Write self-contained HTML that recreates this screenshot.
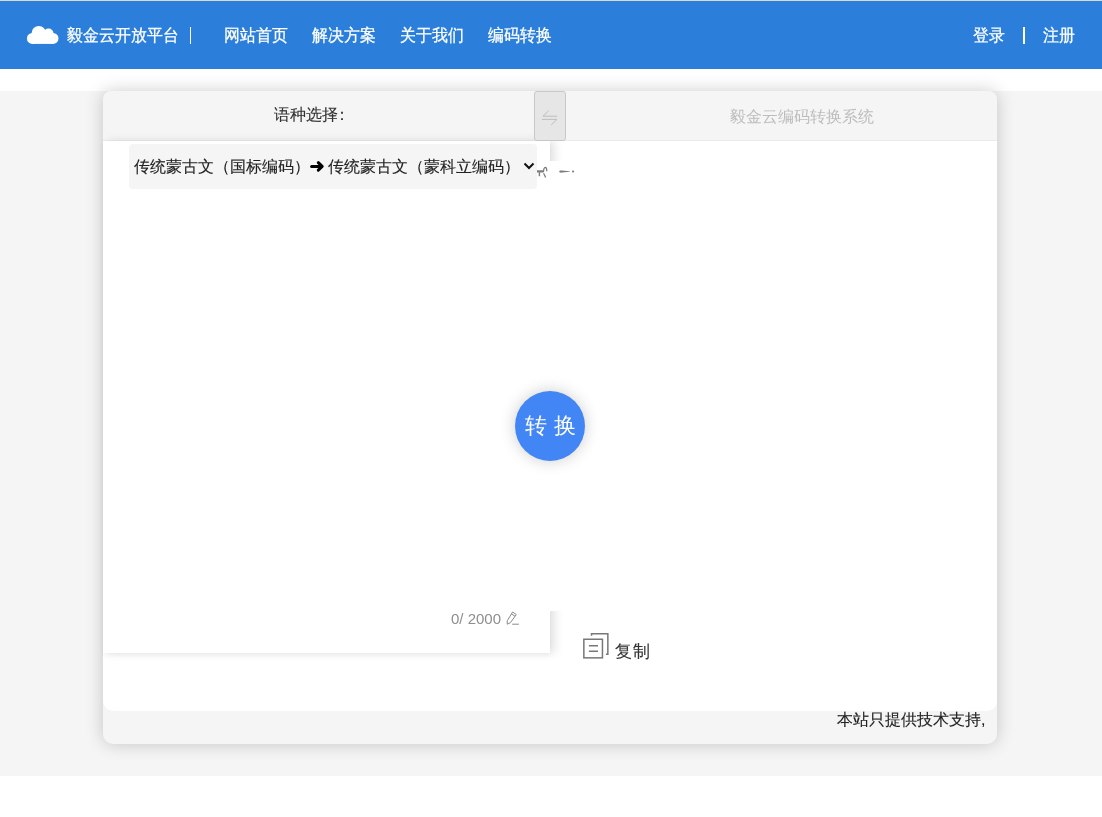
<!DOCTYPE html>
<html><head><meta charset="utf-8">
<style>
*{margin:0;padding:0;box-sizing:border-box}
html,body{width:1102px;height:817px;overflow:hidden;background:#fff;font-family:"Liberation Sans",sans-serif;position:relative}
.s{-webkit-text-stroke:0.12px currentColor}
.hdr{-webkit-text-stroke:0.25px #fff}
.topline{position:absolute;left:0;top:0;width:1102px;height:1px;background:#d9d9d9;z-index:5}
.hdr{position:absolute;left:0;top:0;width:1102px;height:69px;background:#2b7fdb;color:#fff;font-size:16px}
.hdr span{position:absolute;top:23px;transform:translateY(0.7px) scaleY(1.07);line-height:24px;white-space:nowrap}
.cloud{position:absolute;left:26px;top:25px}
.bar{position:absolute;top:27px;width:1.5px;height:16.5px;background:#fff}
.graybg{position:absolute;left:0;top:91px;width:1102px;height:685px;background:#f5f5f5}
.card{position:absolute;left:103px;top:91px;width:894px;height:653px;background:#f5f5f5;border-radius:8px 8px 10px 10px;box-shadow:0 0 18px rgba(0,0,0,.2)}
.cardhead{position:absolute;left:0;top:0;width:894px;height:50px;border-bottom:1px solid #ebebeb}
.body{position:absolute;left:0;top:50px;width:894px;height:570px;background:#fff;border-radius:0 0 10px 10px}
.t{position:absolute;white-space:nowrap;line-height:20px}
.swap{position:absolute;left:431px;top:0;width:32px;height:50px;background:#e6e6e6;border:1px solid #c8c8c8;border-radius:3px}
.sel{position:absolute;left:26px;top:53px;width:408px;height:45px;background:#f5f5f5;border-radius:4px}
.ta{position:absolute;left:0;top:50px;width:447px;height:512px;background:#fff;box-shadow:5px 0 9px rgba(0,0,0,.11),0 2px 5px rgba(0,0,0,.04)}
.cover{position:absolute;left:447px;top:70px;width:440px;height:450px;background:#fff}
.btn{position:absolute;left:412px;top:300px;width:70px;height:70px;border-radius:50%;background:#4285f4;box-shadow:0 0 16px rgba(0,0,0,.2);color:#fff;font-size:22px;text-align:center;line-height:69px;-webkit-text-stroke:0;letter-spacing:7px;text-indent:7px}
</style></head><body class="s"><div id="root" style="position:absolute;left:0;top:0;width:1102px;height:817px;will-change:transform">
<div class="topline"></div>
<div class="hdr">
  <svg class="cloud" width="33" height="20" viewBox="0 0 33 20"><g fill="#fff"><circle cx="12.8" cy="8.2" r="7.2"/><circle cx="22.5" cy="8.5" r="5"/><circle cx="6.4" cy="13.4" r="5.5"/><circle cx="27" cy="13.4" r="5.5"/><rect x="6.4" y="8" width="20.6" height="10.9"/></g></svg>
  <span style="left:67px">毅金云开放平台</span>
  <div class="bar" style="left:190.2px;width:1.2px"></div>
  <span style="left:224px">网站首页</span>
  <span style="left:312px">解决方案</span>
  <span style="left:400px">关于我们</span>
  <span style="left:488px">编码转换</span>
  <span style="left:973px">登录</span>
  <div class="bar" style="left:1023px;width:2px"></div>
  <span style="left:1043px">注册</span>
</div>
<div class="graybg"></div>
<div class="card">
  <div class="cardhead">
    <div class="t" style="left:171px;top:14px;font-size:16px;color:#333">语种选择<span style="margin-left:-4.5px">：</span></div>
    <div class="t" style="left:627px;top:16px;font-size:16px;color:#bdbdbd;-webkit-text-stroke:0">毅金云编码转换系统</div>
  </div>
  <div class="body"></div>
  <div class="ta">
    <div class="t" style="left:348px;top:467.8px;font-size:15px;color:#8e8e8e;-webkit-text-stroke:0">0/ 2000</div>
    
  </div>
  <div class="cover"></div>
  <div class="swap"><svg width="32" height="50" viewBox="0 0 32 50" style="position:absolute;left:-1px;top:-1px"><g fill="none" stroke="#bdbdbd" stroke-width="1"><path d="M23.3 25.2 H9 L14.6 19.7"/><path d="M7.9 28.4 H22.9 L17.2 34"/></g></svg></div>
  <div class="sel"><div class="t" style="left:5px;top:12.5px;font-size:16px;color:#222">传统蒙古文（国标编码）<span style="display:inline-block;width:18px"></span>传统蒙古文（蒙科立编码）</div>
    <svg style="position:absolute;left:0;top:0" width="210" height="40"><g fill="none" stroke="#000" stroke-width="3" stroke-linecap="round" stroke-linejoin="round"><path d="M182.6 22.4 H192.5"/><path d="M189.3 18.7 L193.2 22.4 L189.3 26.1"/></g></svg>
    <svg style="position:absolute;left:394px;top:18.3px" width="12" height="8" viewBox="0 0 12 8"><path d="M1.5 1.5 L6 6 L10.5 1.5" fill="none" stroke="#111" stroke-width="2"/></svg>
  </div>
  <div class="btn">转换</div>
  <div class="t" style="left:512.4px;top:550.5px;font-size:17px;letter-spacing:1px;color:#333">复制</div>
  <div class="t" style="left:734px;top:618.7px;font-size:16px;color:#222">本站只提供技术支持,</div>
</div>
<svg style="position:absolute;left:0;top:0;z-index:10" width="1102" height="817" viewBox="0 0 1102 817">
  <g fill="none" stroke="#787878" stroke-width="1.5">
    <rect x="583.85" y="639.25" width="18.6" height="18.6"/>
    <path d="M591.55 635.8 V633.85 H607.85 V654.3 H605.9"/>
    <path d="M588.9 645.7 H598 M588.9 651.2 H598"/>
  </g>
  <g fill="none" stroke="#8a8a8a" stroke-width="1" stroke-linejoin="round">
    <path d="M512.6 612.0 L516.3 614.5 L510.41 622.71 L507.2 624.2 L507.31 620.67 Z"/>
    <path d="M511.38 613.84 L515.08 616.34"/>
    <path d="M512.2 624.2 H518.9"/>
  </g>
  <g fill="#7d7d7d">
    <path d="M537 170.3 H543.6 V172.6 H540.1 V176.2 H538.7 V172.6 H537 Z"/>
    <path d="M543.4 172 C543.6 169.5 544.2 167.5 545.2 167.3 C546.2 167.2 546.8 168.5 546.8 171.2" fill="none" stroke="#7d7d7d" stroke-width="1.3"/>
    <path d="M543.6 173.3 C544.3 174.8 545.2 176.2 545.6 177.5" fill="none" stroke="#7d7d7d" stroke-width="1.2"/>
    <path d="M559.2 171.5 C559.6 170.3 560.5 170.2 562 170.6 L569.8 171.3 L569.8 171.8 L562 172.5 C560.5 172.9 559.6 172.7 559.2 171.5 Z"/>
    <circle cx="573.1" cy="171.5" r="1.1"/>
  </g>
</svg>
</div></body></html>
